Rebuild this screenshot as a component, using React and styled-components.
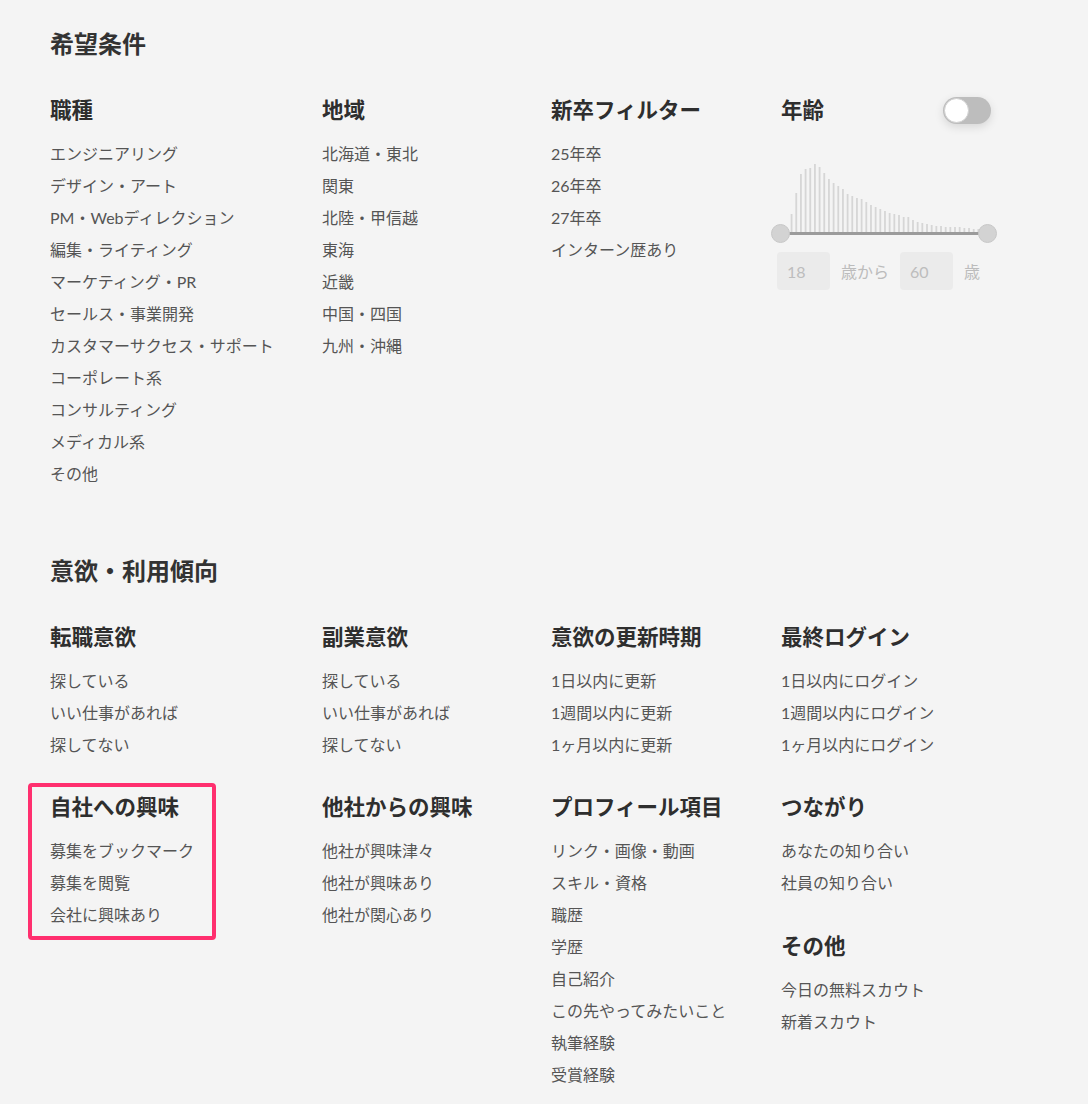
import React from "react";
import styled, { createGlobalStyle } from "styled-components";

const Global = createGlobalStyle`
  html, body { margin: 0; padding: 0; background: #f4f4f4; }
  body { font-family: Lato, "Noto Sans CJK JP", sans-serif; -webkit-font-smoothing: antialiased; }
`;

const Page = styled.div`
  padding: 28px 0 40px 50px;
  display: flex;
  flex-direction: column;
  gap: 65px;
`;

const Section = styled.section`
  display: flex;
  flex-direction: column;
  gap: 36px;
`;

const SectionTitle = styled.h2`
  margin: 0;
  font-size: 24px;
  line-height: 32px;
  font-weight: 700;
  color: #333;
`;

const Grid = styled.div`
  display: grid;
  grid-template-columns: 272px 229px 230px 216px;
  row-gap: 32px;
  align-items: start;
`;

const Stack = styled.div`
  display: flex;
  flex-direction: column;
  gap: 33px;
`;

const Group = styled.div`
  position: relative;
  display: flex;
  flex-direction: column;
  gap: 14px;
  ${(p) =>
    p.$highlight &&
    `
    &::before {
      content: "";
      position: absolute;
      left: -22px;
      top: -10px;
      width: 188px;
      height: 157px;
      box-sizing: border-box;
      border: 4px solid #ff2f6e;
      border-radius: 4px;
      pointer-events: none;
    }
  `}
`;

const HeadRow = styled.div`
  display: flex;
  align-items: center;
  justify-content: space-between;
  width: 210px;
`;

const GroupTitle = styled.h3`
  margin: 0;
  font-size: 21.5px;
  line-height: 28px;
  font-weight: 700;
  color: #2e2e2e;
`;

const List = styled.ul`
  margin: 0;
  padding: 0;
  list-style: none;
`;

const Item = styled.li`
  font-size: 16px;
  line-height: 32px;
  color: #555;
  white-space: nowrap;
`;

const Toggle = styled.div`
  position: relative;
  width: 48px;
  height: 27px;
  border-radius: 14px;
  background: #bdbdbd;
  box-shadow: 0 3px 10px rgba(0, 0, 0, 0.12);
  flex-shrink: 0;
`;

const Knob = styled.div`
  position: absolute;
  left: 1px;
  top: 1px;
  width: 25px;
  height: 25px;
  border-radius: 50%;
  background: #fff;
  box-sizing: border-box;
  border: 1px solid #d0d0d0;
`;

const AgeBody = styled.div`
  margin-top: 22px;
  display: flex;
  flex-direction: column;
`;

const Histogram = styled.svg`
  display: block;
`;

const Track = styled.div`
  position: relative;
  width: 208px;
  height: 3px;
  margin-left: -1px;
  background: #9b9b9b;
`;

const Handle = styled.div`
  position: absolute;
  top: -8px;
  ${(p) => (p.$side === "left" ? "left: -9px;" : "right: -9px;")}
  width: 19px;
  height: 19px;
  border-radius: 50%;
  background: #d3d3d3;
  box-sizing: border-box;
  border: 1px solid #c8c8c8;
`;

const InputRow = styled.div`
  display: flex;
  align-items: center;
  gap: 11px;
  margin-top: 17px;
  margin-left: -4px;
`;

const AgeInput = styled.div`
  width: 53px;
  height: 38px;
  border-radius: 4px;
  background: #ebebeb;
  box-sizing: border-box;
  padding-left: 10px;
  display: flex;
  align-items: center;
  font-size: 16px;
  color: #bdbdbd;
`;

const AgeLabel = styled.span`
  font-size: 16px;
  color: #bcbcbc;
`;

const bars = [2, 18, 39, 58, 63, 64, 68, 65, 59, 53, 49, 46, 43, 38, 36, 34, 33, 30, 27, 25, 23, 21, 19, 18, 17, 15, 15, 12, 10, 9, 8, 7, 6, 6, 5, 5, 5, 5, 4, 4, 3, 3];

function AgeFilter() {
  return (
    <Group>
      <HeadRow>
        <GroupTitle>年齢</GroupTitle>
        <Toggle>
          <Knob />
        </Toggle>
      </HeadRow>
      <AgeBody>
        <Histogram width="208" height="72" viewBox="0 0 208 72">
          {bars.map((h, i) => (
            <rect key={i} x={5 + i * 4.67} y={72 - h} width="1.8" height={h} fill="#d6d6d6" />
          ))}
        </Histogram>
        <Track>
          <Handle $side="left" />
          <Handle $side="right" />
        </Track>
        <InputRow>
          <AgeInput>18</AgeInput>
          <AgeLabel>歳から</AgeLabel>
          <AgeInput>60</AgeInput>
          <AgeLabel>歳</AgeLabel>
        </InputRow>
      </AgeBody>
    </Group>
  );
}

function FilterGroup({ title, items, highlight }) {
  return (
    <Group $highlight={highlight}>
      <GroupTitle>{title}</GroupTitle>
      <List>
        {items.map((t) => (
          <Item key={t}>{t}</Item>
        ))}
      </List>
    </Group>
  );
}

export default function App() {
  return (
    <>
      <Global />
      <Page>
        <Section>
          <SectionTitle>希望条件</SectionTitle>
          <Grid>
            <FilterGroup
              title="職種"
              items={[
                "エンジニアリング",
                "デザイン・アート",
                "PM・Webディレクション",
                "編集・ライティング",
                "マーケティング・PR",
                "セールス・事業開発",
                "カスタマーサクセス・サポート",
                "コーポレート系",
                "コンサルティング",
                "メディカル系",
                "その他",
              ]}
            />
            <FilterGroup
              title="地域"
              items={["北海道・東北", "関東", "北陸・甲信越", "東海", "近畿", "中国・四国", "九州・沖縄"]}
            />
            <FilterGroup title="新卒フィルター" items={["25年卒", "26年卒", "27年卒", "インターン歴あり"]} />
            <AgeFilter />
          </Grid>
        </Section>
        <Section>
          <SectionTitle>意欲・利用傾向</SectionTitle>
          <Grid>
            <FilterGroup title="転職意欲" items={["探している", "いい仕事があれば", "探してない"]} />
            <FilterGroup title="副業意欲" items={["探している", "いい仕事があれば", "探してない"]} />
            <FilterGroup title="意欲の更新時期" items={["1日以内に更新", "1週間以内に更新", "1ヶ月以内に更新"]} />
            <FilterGroup
              title="最終ログイン"
              items={["1日以内にログイン", "1週間以内にログイン", "1ヶ月以内にログイン"]}
            />
            <FilterGroup highlight title="自社への興味" items={["募集をブックマーク", "募集を閲覧", "会社に興味あり"]} />
            <FilterGroup title="他社からの興味" items={["他社が興味津々", "他社が興味あり", "他社が関心あり"]} />
            <FilterGroup
              title="プロフィール項目"
              items={[
                "リンク・画像・動画",
                "スキル・資格",
                "職歴",
                "学歴",
                "自己紹介",
                "この先やってみたいこと",
                "執筆経験",
                "受賞経験",
              ]}
            />
            <Stack>
              <FilterGroup title="つながり" items={["あなたの知り合い", "社員の知り合い"]} />
              <FilterGroup title="その他" items={["今日の無料スカウト", "新着スカウト"]} />
            </Stack>
          </Grid>
        </Section>
      </Page>
    </>
  );
}
